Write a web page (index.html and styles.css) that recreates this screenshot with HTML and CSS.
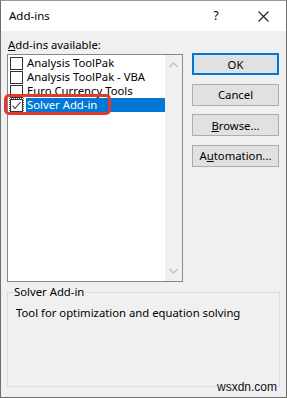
FILE: index.html
```html
<!DOCTYPE html>
<html>
<head>
<meta charset="utf-8">
<link rel="stylesheet" href="styles.css">
</head>
<body>
<div class="window">
  <div class="titlebar">
    <span class="title">Add-ins</span>
    <span class="help">?</span>
    <span class="close"><svg width="11" height="11" viewBox="0 0 11 11"><path d="M0.5 0.5L10.5 10.5M10.5 0.5L0.5 10.5" stroke="#222" stroke-width="1.1" fill="none"/></svg></span>
  </div>
  <div class="content">
    <div class="main">
      <div class="left">
        <div class="label"><u>A</u>dd-ins available:</div>
        <div class="listbox">
          <div class="items">
            <div class="item"><span class="cb"></span><span class="txt">Analysis ToolPak</span></div>
            <div class="item"><span class="cb"></span><span class="txt">Analysis ToolPak - VBA</span></div>
            <div class="item"><span class="cb"></span><span class="txt">Euro Currency Tools</span></div>
            <div class="item"><span class="cb checked"><svg width="11" height="11" viewBox="0 0 11 11"><path d="M1.5 5.5L4 8.5L9.5 2" stroke="#333" stroke-width="1.1" fill="none"/></svg></span><span class="txt sel">Solver Add-in</span></div>
          </div>
          <div class="scroll">
            <svg width="9" height="6" viewBox="0 0 9 6"><path d="M0.5 5L4.5 1L8.5 5" stroke="#c2c2c2" stroke-width="1.3" fill="none"/></svg>
            <svg width="9" height="6" viewBox="0 0 9 6"><path d="M0.5 1L4.5 5L8.5 1" stroke="#c2c2c2" stroke-width="1.3" fill="none"/></svg>
          </div>
          <div class="redmark"></div>
        </div>
      </div>
      <div class="buttons">
        <div class="btn default">OK</div>
        <div class="btn">Cancel</div>
        <div class="btn"><u>B</u>rowse...</div>
        <div class="btn">A<u>u</u>tomation...</div>
      </div>
    </div>
    <div class="group">
      <div class="legend">Solver Add-in</div>
      <div class="desc">Tool for optimization and equation solving</div>
    </div>
  </div>
  <div class="watermark">wsxdn.com</div>
</div>
</body>
</html>
```
FILE: styles.css
```css
* { box-sizing: border-box; }
html, body { margin: 0; padding: 0; }
body {
  width: 287px;
  height: 398px;
  font-family: "Noto Sans", "Open Sans", sans-serif;
  font-size: 11.3px;
  color: #000;
}
.window {
  position: relative;
  width: 287px;
  height: 398px;
  border: 1px solid #6e6e6e;
  border-top-color: #9a9a9a;
  background: #f0f0f0;
  display: flex;
  flex-direction: column;
}
.titlebar {
  height: 30px;
  background: #fff;
  display: flex;
  align-items: center;
  padding-left: 8px;
  flex-shrink: 0;
}
.title { font-size: 11.5px; flex: 1; margin-top: -1px; }
.help { width: 14px; text-align: center; margin-right: 35px; font-size: 12px; margin-top: -1px; }
.close { width: 11px; height: 11px; margin-right: 17px; display: flex; }
.content {
  padding: 6px 6px 0 6px;
  display: flex;
  flex-direction: column;
}
.main { display: flex; gap: 9px; }
.left { width: 176px; display: flex; flex-direction: column; }
.label { height: 17px; line-height: 16px; padding-left: 1px; }
.listbox {
  position: relative;
  height: 228px;
  border: 1px solid #828790;
  background: #fff;
  display: flex;
}
.items { flex: 1; padding-top: 1px; }
.item {
  height: 14px;
  display: flex;
  align-items: center;
  padding-left: 2px;
}
.cb {
  width: 13px;
  height: 13px;
  border: 1px solid #333;
  background: #fff;
  margin-right: 3px;
  display: flex;
  align-items: center;
  justify-content: center;
  flex-shrink: 0;
}
.cb.checked { outline: 1px dotted #555; outline-offset: 0px; }
.txt { line-height: 14px; height: 14px; padding: 0 1px; white-space: nowrap; }
.txt.sel { background: #0078d7; color: #fff; flex: 1; }
.scroll {
  width: 17px;
  background: #f0f0f0;
  display: flex;
  flex-direction: column;
  justify-content: space-between;
  align-items: center;
  padding: 7px 0 7px 0;
}
.redmark {
  position: absolute;
  left: -4px;
  top: 39px;
  width: 107px;
  height: 21px;
  border: 3px solid #e3392d;
  border-radius: 5px;
}
.buttons {
  width: 87px;
  display: flex;
  flex-direction: column;
  gap: 8.5px;
  padding-top: 16px;
}
.btn {
  height: 22px;
  background: #e1e1e1;
  border: 1px solid #adadad;
  display: flex;
  align-items: center;
  justify-content: center;
}
.btn.default { border: 2px solid #0078d7; }
.group {
  position: relative;
  margin-top: 10px;
  height: 95px;
  border: 1px solid #dcdcdc;
}
.legend {
  position: absolute;
  top: -9px;
  left: 5px;
  padding: 0 1px;
  background: #f0f0f0;
  line-height: 16px;
}
.desc { padding: 12px 0 0 8px; line-height: 16px; }
.watermark {
  position: absolute;
  right: 9px;
  bottom: 3px;
  font-family: "Liberation Sans", Arial, sans-serif;
  font-size: 12px;
  color: #111;
  background: #f0f0f0;
}
```
